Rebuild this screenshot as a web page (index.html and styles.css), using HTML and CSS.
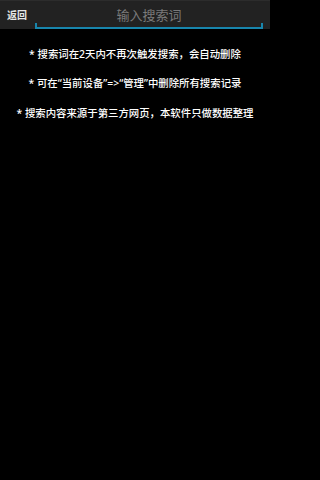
FILE: index.html
```html
<!DOCTYPE html>
<html lang="zh-CN">
<head>
<meta charset="utf-8">
<meta name="viewport" content="width=270">
<title>搜索</title>
<link rel="stylesheet" href="styles.css">
</head>
<body>
<div class="screen">
  <header class="topbar">
    <button class="back" type="button">返回</button>
    <label class="field">
      <input class="field-input" type="text" placeholder="输入搜索词">
    </label>
  </header>
  <main class="notes">
    <p class="note">* 搜索词在2天内不再次触发搜索，会自动删除</p>
    <p class="note">* 可在“当前设备”=>“管理”中删除所有搜索记录</p>
    <p class="note">* 搜索内容来源于第三方网页，本软件只做数据整理</p>
  </main>
</div>
</body>
</html>
```

FILE: styles.css
```css
html, body {
  margin: 0;
  padding: 0;
  background: #000;
  height: 100%;
}
body {
  font-family: "Noto Sans CJK SC", "Noto Sans", "DejaVu Sans", sans-serif;
  color: #fff;
}
.screen {
  width: 270px;
  min-height: 100%;
  background: #000;
}
.topbar {
  height: 29px;
  background: #222;
  border-top: 1px solid #2c2c2c;
  box-sizing: border-box;
  display: flex;
  align-items: flex-start;
  padding: 0 7px 0 7px;
}
.back {
  background: none;
  border: 0;
  padding: 0;
  margin: 0;
  width: 28px;
  height: 28px;
  text-align: left;
  color: #e6e6e6;
  font-family: inherit;
  font-size: 10px;
  font-weight: 700;
  line-height: 28px;
  flex: none;
}
.field {
  flex: 1;
  position: relative;
  height: 26px;
  border-bottom: 2px solid #1886ad;
  display: flex;
}
.field::before,
.field::after {
  content: "";
  position: absolute;
  bottom: 0;
  width: 2px;
  height: 4px;
  background: #1886ad;
}
.field::before { left: 0; }
.field::after { right: 0; }
.field-input {
  flex: 1;
  min-width: 0;
  background: transparent;
  border: 0;
  outline: none;
  padding: 0;
  margin: 0;
  height: 26px;
  text-align: center;
  color: #fff;
  font-family: inherit;
  font-size: 13px;
}
.field-input::placeholder {
  color: #7a7a7a;
}
.notes {
  display: flex;
  flex-direction: column;
  align-items: center;
  gap: 15.5px;
  padding-top: 17.5px;
}
.note {
  margin: 0;
  font-family: "Noto Sans", "Noto Sans CJK SC", sans-serif;
  font-size: 10.4px;
  font-weight: 500;
  letter-spacing: 0;
  line-height: 14px;
  white-space: nowrap;
  text-align: center;
}
```
